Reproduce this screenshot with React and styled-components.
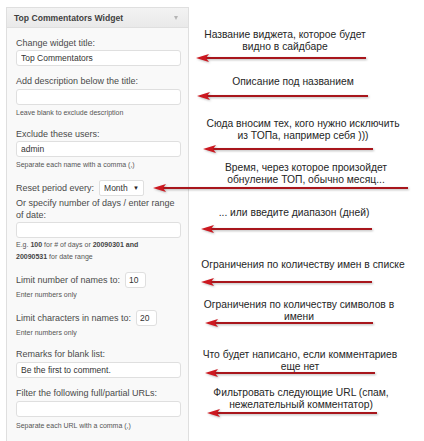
import React from "react";
import styled, { createGlobalStyle } from "styled-components";

const Global = createGlobalStyle`
  html, body { margin: 0; padding: 0; background: #fff; }
  body { font-family: "Liberation Sans", Arial, sans-serif; }
  * { box-sizing: border-box; }
`;

const Page = styled.div`
  display: flex;
  align-items: flex-start;
  width: 424px;
  height: 441px;
  overflow: hidden;
`;

const Panel = styled.section`
  flex-shrink: 0;
  margin: 7px 0 0 6px;
  width: 183px;
  height: 440px;
  border: 1px solid #dfdfdf;
  border-bottom: none;
  background: #f9f9f9;
`;

const Header = styled.div`
  display: flex;
  align-items: center;
  justify-content: space-between;
  height: 20px;
  padding: 0 7px 0 7px;
  border-bottom: 1px solid #dfdfdf;
  background: linear-gradient(#f3f3f3, #e9e9e9);
`;

const Title = styled.h3`
  margin: 0;
  font-size: 8.6px;
  font-weight: bold;
  color: #3f3f3f;
`;

const Toggle = styled.span`
  width: 0;
  height: 0;
  border-left: 2.5px solid transparent;
  border-right: 2.5px solid transparent;
  border-top: 4px solid #b5b5b5;
  margin-right: 3px;
`;

const Body = styled.div`
  padding: 9px 7px 0 9px;
`;

const Field = styled.div`
  margin-top: ${(p) => p.$mt || 0}px;
  margin-bottom: 9px;
`;

const Label = styled.label`
  display: block;
  font-size: 9px;
  line-height: 12px;
  color: #4a4a4a;
  margin-top: ${(p) => p.$mt || 0}px;
  margin-bottom: ${(p) => (p.$mb === undefined ? 1 : p.$mb)}px;
`;

const Input = styled.input`
  display: block;
  width: 100%;
  height: 16px;
  margin: 0;
  padding: 0 4px;
  border: 1px solid #dfdfdf;
  border-radius: 3px;
  background: #fff;
  font-family: inherit;
  font-size: 8.5px;
  color: #333;
  outline: none;
`;

const Help = styled.p`
  margin: ${(p) => p.$mt || 2}px 0 0;
  font-size: 7px;
  line-height: 12px;
  color: #555;
  white-space: nowrap;
  b { font-weight: bold; color: #444; }
`;

const InlineRow = styled.div`
  display: flex;
  align-items: center;
  gap: ${(p) => p.$gap}px;
  height: 16px;
  font-size: 9px;
  color: #4a4a4a;
`;

const SmallInput = styled(Input)`
  width: ${(p) => p.$w}px;
  padding: 0 3px;
`;

const Select = styled.div`
  display: flex;
  align-items: center;
  justify-content: space-between;
  width: 45px;
  height: 16px;
  padding: 0 4px;
  border: 1px solid #dfdfdf;
  border-radius: 2px;
  background: #fff;
  font-size: 8.5px;
  color: #333;
`;

const Caret = styled.span`
  font-size: 6px;
  color: #222;
`;

const Notes = styled.div`
  flex: 1;
  display: flex;
  flex-direction: column;
  margin-left: 1px;
`;

const NoteText = styled.p`
  margin: ${(p) => p.$top}px 0 0 ${(p) => p.$dx}px;
  width: 220px;
  text-align: center;
  font-size: 10.3px;
  line-height: 12px;
  color: #262626;
  white-space: nowrap;
`;

const ArrowSvg = styled.svg`
  display: block;
  position: relative;
  margin: ${(p) => p.$gap}px 0 0 ${(p) => p.$x}px;
  overflow: visible;
  filter: drop-shadow(1px 1.5px 1px rgba(0, 0, 0, 0.28));
`;

function Arrow({ x, w, gap }) {
  return (
    <ArrowSvg $x={x} $gap={gap} width={w} height={10} viewBox={`0 0 ${w} 10`}>
      <line x1="9" y1="5" x2={w} y2="5" stroke="#a8161c" strokeWidth="2" />
      <polygon points="0,5 13,1 10,5 13,9" fill="#cc1820" />
    </ArrowSvg>
  );
}

const notes = [
  { lines: ["Название виджета, которое будет", "видно в сайдбаре"], top: 29, dx: -15, gap: 0, x: 6, w: 170 },
  { lines: ["Описание под названием"], top: 13, dx: -7, gap: 3, x: 7, w: 171 },
  { lines: ["Сюда вносим тех, кого нужно исключить", "из ТОПа, например себя )))"], top: 17, dx: 3, gap: 2, x: 13, w: 170 },
  { lines: ["Время, через которое произойдет", "обнуление ТОП, обычно месяц..."], top: 8, dx: 6, gap: -3, x: -37, w: 255 },
  { lines: ["... или введите диапазон (дней)"], top: 14, dx: -6, gap: 5, x: 11, w: 171 },
  { lines: ["Ограничения по количеству имен в списке"], top: 25, dx: 3, gap: 6, x: 11, w: 171 },
  { lines: ["Ограничения по количеству символов в", "имени"], top: 12, dx: -1, gap: -5, x: 15, w: 168 },
  { lines: ["Что будет написано, если комментариев", "еще нет"], top: 21, dx: 0, gap: -5, x: 15, w: 170 },
  { lines: ["Фильтровать следующие URL (спам,", "нежелательный комментатор)"], top: 9, dx: 1, gap: -3, x: 17, w: 170 },
];

export default function App() {
  return (
    <>
      <Global />
      <Page>
        <Panel>
          <Header>
            <Title>Top Commentators Widget</Title>
            <Toggle />
          </Header>
          <Body>
            <Field>
              <Label>Change widget title:</Label>
              <Input defaultValue="Top Commentators" />
            </Field>
            <Field>
              <Label $mb={2}>Add description below the title:</Label>
              <Input defaultValue="" />
              <Help>Leave blank to exclude description</Help>
            </Field>
            <Field>
              <Label>Exclude these users:</Label>
              <Input defaultValue="admin" />
              <Help>Separate each name with a comma (,)</Help>
            </Field>
            <Field $mt={1}>
              <InlineRow $gap={5}>
                <span>Reset period every:</span>
                <Select>
                  <span>Month</span>
                  <Caret>▼</Caret>
                </Select>
              </InlineRow>
              <Label $mt={1}>
                Or specify number of days / enter range
                <br />
                of date:
              </Label>
              <Input defaultValue="" />
              <Help $mt={1}>
                E.g. <b>100</b> for # of days or <b>20090301 and</b>
                <br />
                <b>20090531</b> for date range
              </Help>
            </Field>
            <Field $mt={1}>
              <InlineRow $gap={5}>
                <span>Limit number of names to:</span>
                <SmallInput $w={21} defaultValue="10" />
              </InlineRow>
              <Help $mt={1}>Enter numbers only</Help>
            </Field>
            <Field $mt={1}>
              <InlineRow $gap={5}>
                <span>Limit characters in names to:</span>
                <SmallInput $w={21} defaultValue="20" />
              </InlineRow>
              <Help $mt={1}>Enter numbers only</Help>
            </Field>
            <Field>
              <Label $mb={2}>Remarks for blank list:</Label>
              <Input defaultValue="Be the first to comment." />
            </Field>
            <Field $mt={1}>
              <Label $mb={2}>Filter the following full/partial URLs:</Label>
              <Input defaultValue="" />
              <Help $mt={3}>Separate each URL with a comma (,)</Help>
            </Field>
          </Body>
        </Panel>
        <Notes>
          {notes.map((n, i) => (
            <React.Fragment key={i}>
              <NoteText $top={n.top} $dx={n.dx}>
                {n.lines.map((l, j) => (
                  <React.Fragment key={j}>
                    {j > 0 && <br />}
                    {l}
                  </React.Fragment>
                ))}
              </NoteText>
              <Arrow x={n.x} w={n.w} gap={n.gap} />
            </React.Fragment>
          ))}
        </Notes>
      </Page>
    </>
  );
}
